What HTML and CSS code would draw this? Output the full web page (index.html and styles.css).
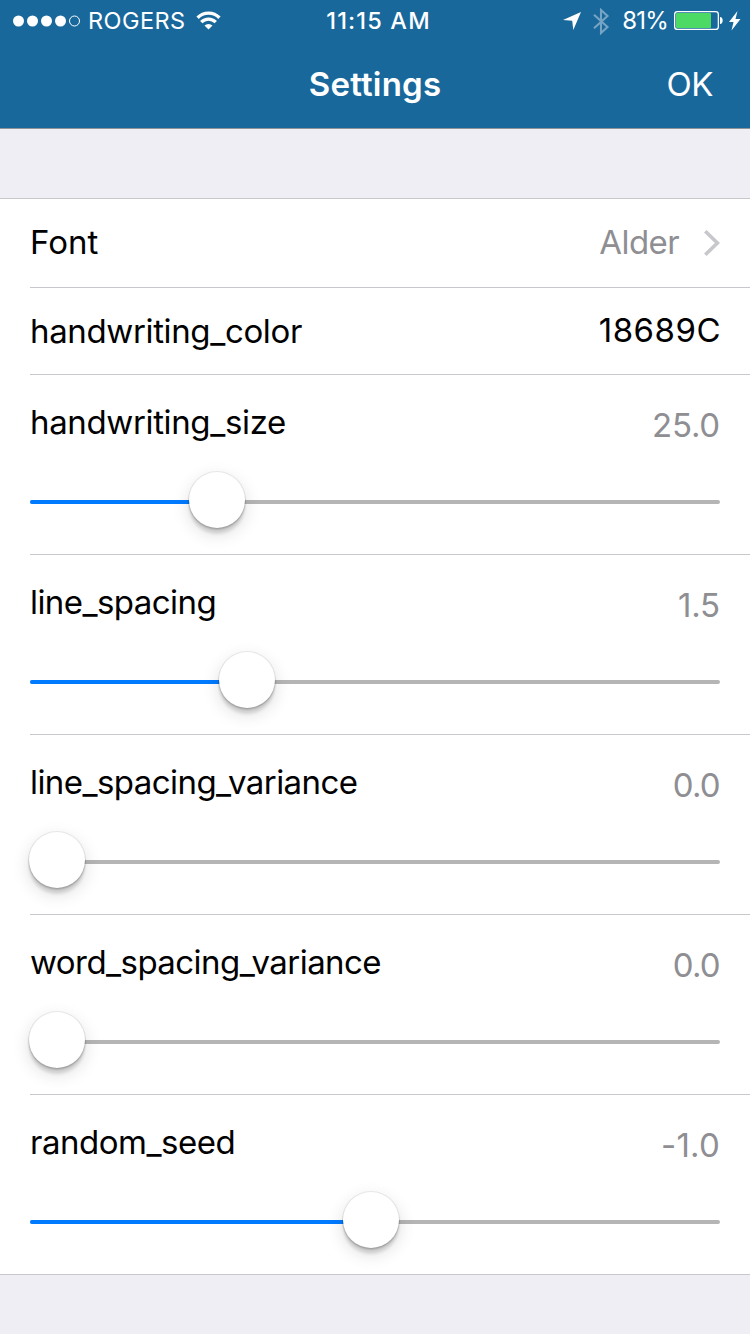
FILE: index.html
```html
<!DOCTYPE html>
<html lang="en">
<head>
<meta charset="utf-8">
<title>Settings</title>
<link rel="stylesheet" href="styles.css">
</head>
<body>
<header class="header">
  <div class="status">
    <div class="status-left">
      <svg class="signal" width="68" height="12" viewBox="0 0 68 12"><g fill="#fff"><circle cx="5.5" cy="6" r="5.5"/><circle cx="19.5" cy="6" r="5.5"/><circle cx="33.5" cy="6" r="5.5"/><circle cx="47.5" cy="6" r="5.5"/></g><circle cx="61.5" cy="6" r="5" fill="none" stroke="#fff"/></svg>
      <span class="carrier">ROGERS</span>
      <svg class="wifi" width="25" height="19" viewBox="0 0 26 20"><g fill="none" stroke="#fff" stroke-width="3.5"><path d="M1.5 7.1a16 16 0 0 1 23 0"/><path d="M5.4 11.8a10.6 10.6 0 0 1 15.2 0"/></g><path d="M8.8 15.300a6 6 0 0 1 8.400 0L13 19.500z" fill="#fff"/></svg>
    </div>
    <div class="clock">11:15 AM</div>
    <div class="status-right">
      <svg class="location" width="18" height="19" viewBox="0 0 18 19"><path d="M18 0L10.300 18L9.200 8.800L0 8z" fill="#fff"/></svg>
      <svg class="bluetooth" width="17" height="27" viewBox="0 0 17 27"><path d="M1 6.700L14.500 19L8 25V2L14.500 8L1 20.300" fill="none" stroke="#76a4c4" stroke-width="2.100"/></svg>
      <span class="percent">81%</span>
      <svg class="battery" width="50" height="20" viewBox="0 0 50 20"><rect x=".65" y=".65" width="43.700" height="17.700" rx="2.700" fill="none" stroke="#fff" stroke-width="1.300"/><rect x="2" y="2" width="35" height="15" rx="1" fill="#4cd964"/><path d="M46 6c3.600 0 3.600 7 0 7z" fill="#fff"/></svg>
      <svg class="bolt" width="12" height="20" viewBox="0 0 12 20"><path d="M8.500 0L0 11H4.500L2.500 19.500L11.500 8H6.500z" fill="#fff"/></svg>
    </div>
  </div>
  <nav class="nav">
    <span></span>
    <h1 class="title">Settings</h1>
    <span class="ok">OK</span>
  </nav>
</header>
<main class="list">
  <div class="row row-font">
    <span class="label font-label">Font</span>
    <span class="value font-value">Alder</span>
    <svg class="chevron" width="16" height="26" viewBox="0 0 16 26"><path d="M1.300 1.300L13.400 13L1.300 24.700" fill="none" stroke="#c7c7cc" stroke-width="3.600"/></svg>
  </div>
  <div class="row row-color">
    <span class="label color-label">handwriting_color</span>
    <span class="value color-value">18689C</span>
  </div>
  <div class="row row-slider">
    <div class="caption"><span class="label size-label">handwriting_size</span><span class="value">25.0</span></div>
    <div class="track"><div class="fill" style="width:187px"><i class="thumb"></i></div></div>
  </div>
  <div class="row row-slider">
    <div class="caption"><span class="label line-label">line_spacing</span><span class="value">1.5</span></div>
    <div class="track"><div class="fill" style="width:217px"><i class="thumb"></i></div></div>
  </div>
  <div class="row row-slider">
    <div class="caption"><span class="label line-label">line_spacing_variance</span><span class="value zero-value">0.0</span></div>
    <div class="track"><div class="fill" style="width:27px"><i class="thumb"></i></div></div>
  </div>
  <div class="row row-slider">
    <div class="caption"><span class="label line-label">word_spacing_variance</span><span class="value zero-value">0.0</span></div>
    <div class="track"><div class="fill" style="width:27px"><i class="thumb"></i></div></div>
  </div>
  <div class="row row-slider">
    <div class="caption"><span class="label seed-label">random_seed</span><span class="value seed-value">-1.0</span></div>
    <div class="track"><div class="fill" style="width:341px"><i class="thumb"></i></div></div>
  </div>
</main>
</body>
</html>
```
FILE: styles.css
```css
* { box-sizing: border-box; }
body {
  margin: 0;
  min-height: 1334px;
  background: #efeef4;
  font-family: Inter, "Liberation Sans", sans-serif;
  color: #000;
}
svg { display: block; flex: none; }
.header {
  height: 129px;
  background: #19689b;
  border-bottom: 1px solid #8f9499;
  color: #fff;
}
.status {
  display: grid;
  grid-template-columns: 1fr auto 1fr;
  height: 40px;
  align-items: center;
  font-size: 23.5px;
  line-height: 40px;
  padding-top: 1px;
}
.status-left { display: flex; align-items: center; padding-left: 13px; }
.carrier { margin-left: 7px; letter-spacing: 0.45px; }
.wifi { margin-left: 10px; margin-bottom: 1px; }
.clock { font-weight: 500; font-size: 23.5px; letter-spacing: 1.15px; margin-left: 7px; }
.status-right { display: flex; align-items: center; justify-content: flex-end; padding-right: 9px; }
.bluetooth { margin-left: 12px; }
.percent { margin-left: 12px; font-size: 24px; letter-spacing: -0.8px; }
.battery { margin-left: 6px; }
.bolt { margin-left: 5px; margin-bottom: 1px; }
.nav {
  display: grid;
  grid-template-columns: 1fr auto 1fr;
  height: 88px;
  align-items: center;
  padding: 0 37px;
  font-size: 33px;
}
.title { margin: 0; font-size: 33px; font-weight: 600; letter-spacing: 0.2px; }
.ok { text-align: right; letter-spacing: -0.4px; }
.list {
  margin-top: 69px;
  border-top: 1px solid #c8c7cc;
  border-bottom: 1px solid #c8c7cc;
  padding-left: 30px;
  background: #fff;
}
.row { border-bottom: 1px solid #c8c7cc; padding-right: 30px; }
.row:last-child { border-bottom: 0; }
.row-font, .row-color { display: flex; align-items: center; }
.row-font { height: 89px; padding-bottom: 2px; }
.row-color { height: 87px; }
.label { font-size: 33px; line-height: 40px; white-space: nowrap; }
.value { font-size: 33px; line-height: 40px; margin-left: auto; color: #8e8e93; letter-spacing: -0.2px; }
.font-value { letter-spacing: -0.6px; }
.color-value { color: #000; letter-spacing: 0.5px; margin-right: -1px; padding-bottom: 2px; }
.zero-value { letter-spacing: -0.7px; }
.seed-value { letter-spacing: 0.2px; }
.color-label, .size-label { letter-spacing: -0.36px; }
.line-label { letter-spacing: -0.56px; }
.seed-label { letter-spacing: -0.48px; }
.chevron { margin-left: 25px; margin-top: 2px; }
.row-slider { height: 180px; padding-top: 27px; }
.row-slider:last-child { height: 179px; }
.caption { display: flex; }
.caption .value { padding-top: 3px; }
.track { height: 4px; margin-top: 55px; border-radius: 2px; background: #b5b5b5; }
.fill { position: relative; height: 4px; border-radius: 2px; background: #007aff; }
.thumb {
  position: absolute;
  right: -28px;
  top: -30px;
  width: 56px;
  height: 56px;
  border-radius: 50%;
  background: #fff;
  transform: translateY(2px);
  box-shadow: 0 0 0 1px rgba(0,0,0,.07), 0 6px 3px rgba(0,0,0,.11), 0 2px 2px rgba(0,0,0,.16), 0 6px 18px rgba(0,0,0,.14);
}
```
